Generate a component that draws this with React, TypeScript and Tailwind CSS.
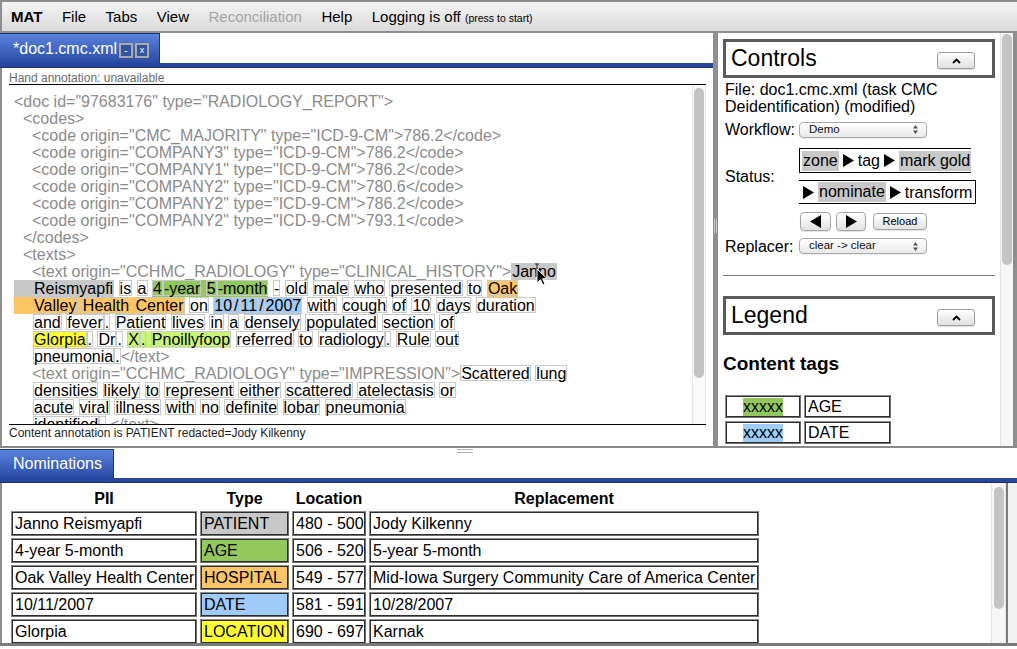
import React from "react";

const BG: Record<string, string> = {
  p: "bg-[#c8c8c8]",
  a: "bg-[#93c85d]",
  h: "bg-[#fcc667]",
  d: "bg-[#9fcbf9]",
  l: "bg-[#ffff33]",
  r: "bg-[#c8f57a]",
};

function Tok({ children }: { children: React.ReactNode }) {
  return (
    <span className="inline-block align-top h-[16px] leading-[15px] border border-[#c9c9c9]">
      {children}
    </span>
  );
}

function words(s: string): React.ReactNode[] {
  const out: React.ReactNode[] = [];
  s.split(" ").forEach((w, i) => {
    if (i > 0) out.push(" ");
    w.split("|")
      .filter((t) => t !== "")
      .forEach((t, j) => out.push(<Tok key={`${i}-${j}`}>{t}</Tok>));
  });
  return out;
}

function renderLine(src: string) {
  const parts = src.split(/(\[[a-z]:[^\]]+\]|\{[^}]+\})/).filter((p) => p !== "");
  return parts.map((p, i) => {
    if (p.startsWith("[")) {
      const k = p[1];
      return (
        <span key={i} className={`inline-block align-top h-[17px] ${BG[k]}`}>
          {words(p.slice(3, -1))}
        </span>
      );
    }
    if (p.startsWith("{")) {
      return (
        <span key={i} className="text-[#8b8b8b]">
          {p.slice(1, -1)}
        </span>
      );
    }
    return <React.Fragment key={i}>{words(p)}</React.Fragment>;
  });
}

const LINES: [string, string, string?][] = [
  ["", '{<doc id="97683176" type="RADIOLOGY_REPORT">}'],
  ["pl-[9px]", "{<codes>}"],
  ["pl-[18px]", '{<code origin="CMC_MAJORITY" type="ICD-9-CM">786.2</code>}'],
  ["pl-[18px]", '{<code origin="COMPANY3" type="ICD-9-CM">786.2</code>}'],
  ["pl-[18px]", '{<code origin="COMPANY1" type="ICD-9-CM">786.2</code>}'],
  ["pl-[18px]", '{<code origin="COMPANY2" type="ICD-9-CM">780.6</code>}'],
  ["pl-[18px]", '{<code origin="COMPANY2" type="ICD-9-CM">786.2</code>}'],
  ["pl-[18px]", '{<code origin="COMPANY2" type="ICD-9-CM">793.1</code>}'],
  ["pl-[9px]", "{</codes>}"],
  ["pl-[9px]", "{<texts>}"],
  ["pl-[18px]", '{<text origin="CCHMC_RADIOLOGY" type="CLINICAL_HISTORY">}[p:Janno]'],
  ["", "[p:Reismyapfi] is a [a:4|-year 5|-month] - old male who presented to [h:Oak]", "p"],
  ["", "[h:Valley Health Center] on [d:10|/|11|/|2007] with cough of 10 days duration", "h"],
  ["pl-[19px]", "and fever|. Patient lives in a densely populated section of"],
  ["pl-[19px]", "[l:Glorpia]|. Dr|. [r:X|. Pnoillyfoop] referred to radiology|. Rule out"],
  ["pl-[19px]", "pneumonia|.{</text>}"],
  ["pl-[18px]", '{<text origin="CCHMC_RADIOLOGY" type="IMPRESSION">}Scattered lung'],
  ["pl-[19px]", "densities likely to represent either scattered atelectasis or"],
  ["pl-[19px]", "acute viral illness with no definite lobar pneumonia"],
  ["pl-[19px]", "identified|. {</text>}"],
];

function Tri({ left }: { left?: boolean }) {
  return (
    <svg width="11" height="13" viewBox="0 0 11 13" className="shrink-0">
      {left ? <path d="M11 0 L11 13 L0 6.5 Z" fill="#000" /> : <path d="M0 0 L0 13 L11 6.5 Z" fill="#000" />}
    </svg>
  );
}

function Select({ label }: { label: string }) {
  return (
    <div className="w-[128px] h-[16px] rounded-[4px] border border-[#ababab] bg-gradient-to-b from-white to-[#e9e9e9] flex items-center justify-between pl-[9px] pr-[8px] text-[11.5px] leading-none text-[#111] shadow-[0_1px_1px_rgba(0,0,0,0.08)]">
      <span>{label}</span>
      <svg width="5" height="9" viewBox="0 0 5 9">
        <path d="M2.5 0 L5 3.5 H0 Z M2.5 9 L0 5.5 H5 Z" fill="#555" />
      </svg>
    </div>
  );
}

function Box({ title }: { title: string }) {
  return (
    <div className="w-[272px] h-[39px] border-[3px] border-[#5a5a5a] flex items-center justify-between pl-[5px] pr-[17px]">
      <span className="text-[23px] leading-none">{title}</span>
      <div className="mt-[4px] w-[38px] h-[17px] rounded-[3px] border border-[#a0a0a0] bg-gradient-to-b from-white to-[#e0e0e0] flex items-center justify-center shadow-[0_1px_1px_rgba(0,0,0,0.15)]">
        <svg width="9" height="6" viewBox="0 0 9 6">
          <path d="M1 5 L4.5 1.5 L8 5" stroke="#000" strokeWidth="1.8" fill="none" />
        </svg>
      </div>
    </div>
  );
}

function Cell({ children, bg, center }: { children?: React.ReactNode; bg?: string; center?: boolean }) {
  return (
    <div className="border border-[#8c8c8c] border-b-[#6e6e6e] border-r-[#6e6e6e]">
      <div
        className={`h-full border border-[#2e2e2e] text-[16px] leading-[19px] whitespace-nowrap flex items-center ${
          center ? "justify-center" : "pl-[2px]"
        } ${bg ?? "bg-white"}`}
      >
        {children}
      </div>
    </div>
  );
}

function MenuBar() {
  return (
    <div className="h-[33px] shrink-0 flex items-center pl-[9px] gap-[19.5px] border-t-2 border-b-2 border-l-2 border-[#8e8e8e] bg-gradient-to-b from-[#f4f4f4] to-[#dadada] text-[15px] leading-none">
      <span className="font-bold">MAT</span>
      <span>File</span>
      <span>Tabs</span>
      <span>View</span>
      <span className="text-[#a4a4a4]">Reconciliation</span>
      <span>Help</span>
      <span>
        Logging is off <span className="text-[10.5px]">(press to start)</span>
      </span>
    </div>
  );
}

function LeftPanel() {
  return (
    <div className="w-[713px] shrink-0 flex flex-col">
      <div className="h-[30px] flex bg-white">
        <div className="h-[30px] w-[160px] flex items-center pl-[13px] text-white text-[16px] bg-gradient-to-b from-[#5b83df] to-[#2a4ba4] border-t border-r border-[#1d3578]">
          <span>*doc1.cmc.xml</span>
          <span className="self-end mb-[5px] ml-[2px] w-[14px] h-[15px] border-2 border-[#a9a9a9] bg-[#34549f] flex items-center justify-center text-[10px] leading-none text-white">
            -
          </span>
          <span className="self-end mb-[5px] ml-[2px] w-[14px] h-[15px] border-2 border-[#a9a9a9] bg-[#34549f] flex items-center justify-center text-[9px] leading-none text-white">
            x
          </span>
        </div>
      </div>
      <div className="h-[5px] bg-[#26459d] border-b border-[#1a2f6c]" />
      <div className="flex-1 flex flex-col border-l-2 border-[#8e8e8e] px-[7px]">
        <div className="h-[17px] text-[12px] leading-[21px] text-[#6a6a6a] border-b border-black">
          Hand annotation: unavailable
        </div>
        <div className="h-[339px] flex">
          <div className="flex-1 overflow-hidden pl-[5px] pt-[8px] text-[16px] leading-[17px]">
            {LINES.map(([c, s, lead], i) => (
              <div key={i} className={`h-[17px] whitespace-nowrap ${c}`}>
                {lead ? <span className={`inline-block align-top w-[19px] h-[17px] ${BG[lead]}`} /> : null}
                {renderLine(s)}
              </div>
            ))}
          </div>
          <div className="w-[14px] bg-[#fafafa] border-l border-r border-[#e6e6e6] pt-[3px] flex justify-center">
            <div className="w-[10px] h-[290px] rounded-full bg-[#c3c3c3]" />
          </div>
        </div>
        <div className="border-t border-black text-[12px] leading-[16px] text-[#1e1e1e]">
          Content annotation is PATIENT redacted=Jody Kilkenny
        </div>
      </div>
    </div>
  );
}

function RightPanel() {
  return (
    <div className="flex-1 flex min-w-0">
      <div className="flex-1 pl-[5px] pt-[6px] overflow-hidden text-[16px] leading-[17px]">
        <Box title="Controls" />
        <div className="pl-[2px] mt-[3px]">
          File: doc1.cmc.xml (task CMC
          <br />
          Deidentification) (modified)
        </div>
        <div className="mt-[6px] pl-[2px] flex items-center h-[17px]">
          <span className="w-[74px]">Workflow:</span>
          <Select label="Demo" />
        </div>
        <div className="mt-[10px] pl-[2px] flex items-center">
          <span className="w-[74px]">Status:</span>
          <div className="flex flex-col items-start gap-[7px]">
            <div className="h-[25px] border-l border-t border-b border-black flex items-center gap-[4px] pl-[2px]">
              <span className="bg-[#c8c8c8] px-[1px] leading-[20px]">zone</span>
              <Tri />
              <span>tag</span>
              <Tri />
              <span className="bg-[#c8c8c8] px-[1px] leading-[20px]">mark gold</span>
            </div>
            <div className="h-[24px] border-t border-r border-b border-black flex items-center gap-[4px] pl-[4px] pr-[3px]">
              <Tri />
              <span className="bg-[#c8c8c8] px-[1px] leading-[20px]">nominate</span>
              <Tri />
              <span>transform</span>
            </div>
          </div>
        </div>
        <div className="mt-[8px] pl-[77px] flex items-center">
          <div className="w-[31px] h-[19px] rounded-[4px] border border-[#a5a5a5] bg-gradient-to-b from-white to-[#e3e3e3] flex items-center justify-center shadow-[0_1px_1px_rgba(0,0,0,0.12)]">
            <Tri left />
          </div>
          <div className="ml-[5px] w-[30px] h-[19px] rounded-[4px] border border-[#a5a5a5] bg-gradient-to-b from-white to-[#e3e3e3] flex items-center justify-center shadow-[0_1px_1px_rgba(0,0,0,0.12)]">
            <Tri />
          </div>
          <div className="ml-[7px] w-[54px] h-[17px] rounded-[4px] border border-[#a5a5a5] bg-gradient-to-b from-white to-[#e3e3e3] flex items-center justify-center text-[11px] leading-none shadow-[0_1px_1px_rgba(0,0,0,0.12)]">
            Reload
          </div>
        </div>
        <div className="mt-[7px] pl-[2px] flex items-center h-[16px]">
          <span className="w-[74px]">Replacer:</span>
          <Select label="clear -> clear" />
        </div>
        <div className="mt-[21px] w-[272px] h-px bg-[#7a7a7a]" />
        <div className="mt-[20px]">
          <Box title="Legend" />
        </div>
        <div className="mt-[17px] text-[19px] leading-[23px] font-bold">Content tags</div>
        <div className="mt-[20px] ml-[2px] grid grid-cols-[76px_87px] gap-x-[3px] gap-y-[3px] auto-rows-[23px]">
          <Cell center>
            <span className="bg-[#93c85d] leading-[18px]">xxxxx</span>
          </Cell>
          <Cell>AGE</Cell>
          <Cell center>
            <span className="bg-[#9fcbf9] leading-[18px]">xxxxx</span>
          </Cell>
          <Cell>DATE</Cell>
        </div>
      </div>
      <div className="w-[13px] bg-[#f6f6f6] border-l border-[#e3e3e3] pt-[1px] flex justify-center">
        <div className="w-[10px] h-[231px] rounded-full bg-[#c4c4c4]" />
      </div>
      <div className="w-[4px] bg-[#8e8e8e]" />
    </div>
  );
}

const ROWS: [string, string, string, string, string][] = [
  ["Janno Reismyapfi", "PATIENT", "bg-[#c8c8c8]", "480 - 500", "Jody Kilkenny"],
  ["4-year 5-month", "AGE", "bg-[#93c85d]", "506 - 520", "5-year 5-month"],
  ["Oak Valley Health Center", "HOSPITAL", "bg-[#fcc667]", "549 - 577", "Mid-Iowa Surgery Community Care of America Center"],
  ["10/11/2007", "DATE", "bg-[#9fcbf9]", "581 - 591", "10/28/2007"],
  ["Glorpia", "LOCATION", "bg-[#ffff33]", "690 - 697", "Karnak"],
];

function BottomPanel() {
  return (
    <div className="h-[194px] shrink-0 flex flex-col">
      <div className="h-[29px] flex relative">
        <div className="w-[114px] h-[29px] flex items-center pl-[13px] text-white text-[16px] bg-gradient-to-b from-[#5b83df] to-[#2a4ba4] border-t border-r border-[#1d3578]">
          Nominations
        </div>
        <div className="absolute left-[457px] top-0 w-[16px] h-[4px] border-t border-b border-[#b2b2b2]" />
      </div>
      <div className="h-[5px] bg-[#26459d] border-b border-[#1a2f6c]" />
      <div className="flex-1 flex border-l-2 border-[#8e8e8e] min-h-0">
        <div className="flex-1 pl-[9px] pt-[3px] overflow-hidden">
          <div className="grid grid-cols-[186px_89px_74px_390px] grid-rows-[23px] auto-rows-[25px] gap-x-[3px] gap-y-[2px]">
            {["PII", "Type", "Location", "Replacement"].map((h) => (
              <div key={h} className="flex items-center justify-center font-bold text-[16px] pt-[2px]">
                {h}
              </div>
            ))}
            {ROWS.map((r) => (
              <React.Fragment key={r[0]}>
                <Cell>{r[0]}</Cell>
                <Cell bg={r[2]}>{r[1]}</Cell>
                <Cell>{r[3]}</Cell>
                <Cell>{r[4]}</Cell>
              </React.Fragment>
            ))}
          </div>
        </div>
        <div className="w-[15px] bg-[#f6f6f6] border-l border-r border-[#e3e3e3] pt-[4px] flex justify-center">
          <div className="w-[10px] h-[122px] rounded-full bg-[#c4c4c4]" />
        </div>
        <div className="w-[11px] border-l-2 border-[#7a7a7a] bg-[#f2f2f2]" />
      </div>
    </div>
  );
}

export default function App() {
  return (
    <div className="relative w-[1017px] h-[649px] overflow-hidden bg-white text-black font-['Liberation_Sans',Arial,Helvetica,sans-serif] flex flex-col">
      <MenuBar />
      <div className="h-[413px] shrink-0 flex">
        <LeftPanel />
        <div className="w-[5px] shrink-0 bg-[#8f8f8f] relative">
          <div className="absolute left-[1px] top-[186px] w-[3px] h-[14px] border-l border-r border-[#c8c8c8]" />
        </div>
        <RightPanel />
      </div>
      <div className="h-[3px] shrink-0 border-t-2 border-[#8a8a8a]" />
      <BottomPanel />
      <div className="h-[6px] shrink-0 border-t-[3px] border-[#7a7a7a] bg-white" />
      <svg className="absolute left-[533px] top-[263px]" width="16" height="26" viewBox="0 0 16 26">
        <path d="M2 1h4M4 1v8M2 9h4" stroke="#222" strokeWidth="1" fill="none" />
        <path d="M4 6 L4 20 L7.5 16.8 L10 22 L12 21 L9.6 15.8 L14 15.6 Z" fill="#000" stroke="#fff" strokeWidth="1" />
      </svg>
    </div>
  );
}
